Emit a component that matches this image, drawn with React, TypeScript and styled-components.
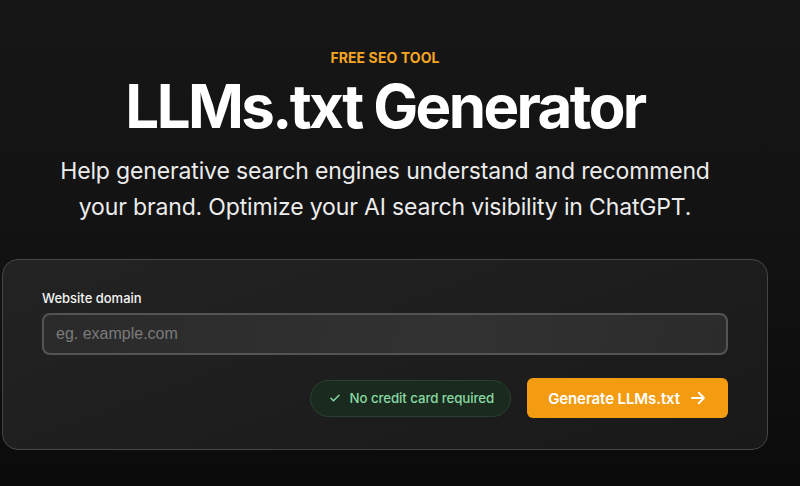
import React from 'react';
import styled, { createGlobalStyle } from 'styled-components';

const GlobalStyle = createGlobalStyle`
  html, body {
    margin: 0;
    padding: 0;
    background: #0c0c0c;
  }
  body {
    font-family: Inter, "Noto Sans", sans-serif;
    color: #fff;
  }
`;

const Page = styled.main`
  width: 100%;
  height: 486px;
  overflow: hidden;
  background: linear-gradient(180deg, #161616 0%, #131313 45%, #0b0b0b 100%);
  box-sizing: border-box;
  padding: 49px 32px 0 2px;
  display: flex;
  flex-direction: column;
  align-items: center;
`;

const Kicker = styled.div`
  color: #f5a623;
  font-size: 14px;
  font-weight: 700;
  letter-spacing: 0.1px;
  line-height: 18px;
`;

const Title = styled.h1`
  margin: 3px 0 0;
  font-size: 60px;
  font-weight: 700;
  letter-spacing: -2.6px;
  line-height: 72px;
  color: #fff;
`;

const Subtitle = styled.p`
  margin: 11px 0 0;
  font-size: 23px;
  font-weight: 400;
  line-height: 36px;
  letter-spacing: -0.15px;
  color: #ececec;
  text-align: center;
`;

const Card = styled.section`
  margin-top: 34px;
  align-self: stretch;
  box-sizing: border-box;
  padding: 30px 39px 31px;
  border: 1px solid #464646;
  border-radius: 16px;
  background: linear-gradient(160deg, #232323 0%, #1d1d1d 60%, #191919 100%);
  display: flex;
  flex-direction: column;
`;

const Label = styled.label`
  font-size: 13px;
  font-weight: 500;
  color: #f4f4f4;
  line-height: 16px;
`;

const Input = styled.input`
  margin-top: 7px;
  height: 42px;
  box-sizing: border-box;
  border: 2px solid #545454;
  border-radius: 8px;
  background: linear-gradient(100deg, #2a2a2a, #323232 60%, #2b2b2b);
  padding: 0 12px;
  font-family: "Liberation Sans", Arial, sans-serif;
  font-size: 16px;
  color: #eee;
  outline: none;
  caret-color: #fff;
  &::placeholder {
    color: #7b7b7b;
  }
`;

const Actions = styled.div`
  margin-top: 23px;
  display: flex;
  justify-content: flex-end;
  align-items: center;
  gap: 16px;
`;

const Badge = styled.div`
  height: 37px;
  box-sizing: border-box;
  padding: 0 16px 0 18px;
  border: 1px solid #284232;
  border-radius: 19px;
  background: #1a2a1f;
  color: #86d9a0;
  font-size: 13.3px;
  font-weight: 500;
  letter-spacing: -0.1px;
  display: flex;
  align-items: center;
  gap: 9px;
`;

const Button = styled.button`
  height: 40px;
  box-sizing: border-box;
  padding: 0 21px;
  border: none;
  border-radius: 6px;
  background: #f39c12;
  color: #fff;
  font-family: Inter, sans-serif;
  font-size: 15px;
  font-weight: 600;
  letter-spacing: -0.1px;
  display: flex;
  align-items: center;
  gap: 9px;
  cursor: pointer;
`;

const Check = () => (
  <svg width="12" height="12" viewBox="0 0 24 24" fill="none" stroke="currentColor" strokeWidth="3" strokeLinecap="round" strokeLinejoin="round">
    <path d="M4 12.5l5 5L20 6.5" />
  </svg>
);

const Arrow = () => (
  <svg width="18" height="18" viewBox="0 0 24 24" fill="none" stroke="currentColor" strokeWidth="2.4" strokeLinecap="round" strokeLinejoin="round">
    <path d="M4 12h16M13 5l7 7-7 7" />
  </svg>
);

export default function App() {
  return (
    <>
      <GlobalStyle />
      <Page>
        <Kicker>FREE SEO TOOL</Kicker>
        <Title>LLMs.txt Generator</Title>
        <Subtitle>
          Help generative search engines understand and recommend
          <br />
          your brand. Optimize your AI search visibility in ChatGPT.
        </Subtitle>
        <Card>
          <Label htmlFor="domain">Website domain</Label>
          <Input id="domain" placeholder="eg. example.com" autoFocus />
          <Actions>
            <Badge>
              <Check />
              No credit card required
            </Badge>
            <Button>
              Generate LLMs.txt
              <Arrow />
            </Button>
          </Actions>
        </Card>
      </Page>
    </>
  );
}
